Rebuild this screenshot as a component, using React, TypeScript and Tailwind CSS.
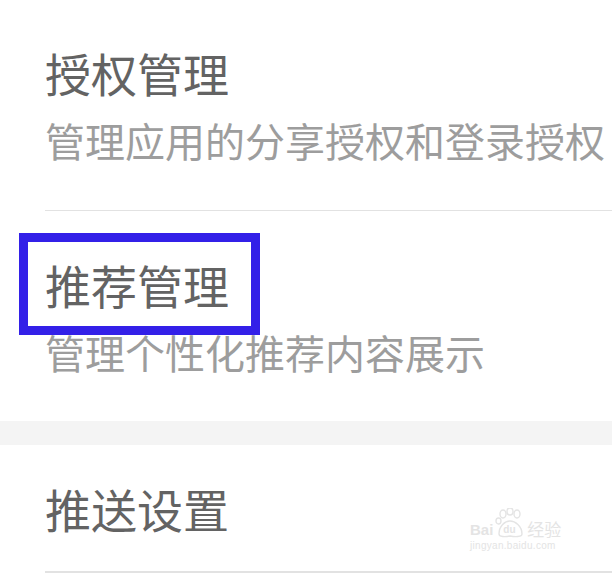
const font = "font-['Noto_Sans_CJK_SC','Noto_Sans',sans-serif]"

function Item({ title, desc, boxed }: { title: string; desc?: string; boxed?: boolean }) {
  return (
    <div>
      <div className="relative">
        {boxed && (
          <div className="absolute -left-[26px] -top-[19px] w-[241px] h-[102px] border-[9px] border-[#3320e8]" />
        )}
        <div className="text-[46px] leading-[64px] text-[#636363] whitespace-nowrap">{title}</div>
      </div>
      {desc && <div className="text-[40px] leading-[72px] text-[#9d9d9d] whitespace-nowrap">{desc}</div>}
    </div>
  )
}

export default function App() {
  return (
    <div className={`w-[612px] h-[576px] bg-white overflow-hidden relative ${font}`}>
      <div className="pl-[45px] pt-[40px] pb-[34px]">
        <Item title="授权管理" desc="管理应用的分享授权和登录授权" />
      </div>
      <div className="ml-[45px] h-[1px] bg-[#e2e2e2]" />
      <div className="pl-[45px] pt-[41px] pb-[33px]">
        <Item title="推荐管理" desc="管理个性化推荐内容展示" boxed />
      </div>
      <div className="h-[24px] bg-[#f4f4f4]" />
      <div className="pl-[45px] pt-[31px] pb-[31px]">
        <Item title="推送设置" />
      </div>
      <div className="ml-[45px] h-[2px] bg-[#e2e2e2]" />

      {/* 水印 */}
      <div className="absolute left-[470px] top-[508px] flex flex-col items-start text-[#e4e4e4] font-['Liberation_Sans',sans-serif] select-none">
        <div className="flex items-end">
          <span className="text-[15px] leading-[16px] font-bold">Bai</span>
          <span className="relative ml-[2px] w-[30px] h-[30px]">
            <svg viewBox="0 0 30 30" className="w-[30px] h-[30px]" fill="none" stroke="#e4e4e4" strokeWidth="1.4">
              <ellipse cx="8" cy="6" rx="3" ry="4" />
              <ellipse cx="15" cy="3.5" rx="3" ry="3.5" />
              <ellipse cx="22" cy="6" rx="3" ry="4" />
              <ellipse cx="3.5" cy="13" rx="2.5" ry="3" />
              <path d="M4 26 C4 18 10 13 15 13 C20 13 27 18 27 26 C27 29 20 29 15 28 C10 29 4 29 4 26 Z" />
            </svg>
            <span className="absolute left-[8px] top-[17px] text-[10px] leading-[10px] font-bold">du</span>
          </span>
          <span className={`text-[17px] leading-[18px] ml-[2px] ${font}`}>经验</span>
        </div>
        <div className="text-[10px] leading-[12px] mt-[2px] tracking-[0.3px]">jingyan.baidu.com</div>
      </div>
    </div>
  )
}
